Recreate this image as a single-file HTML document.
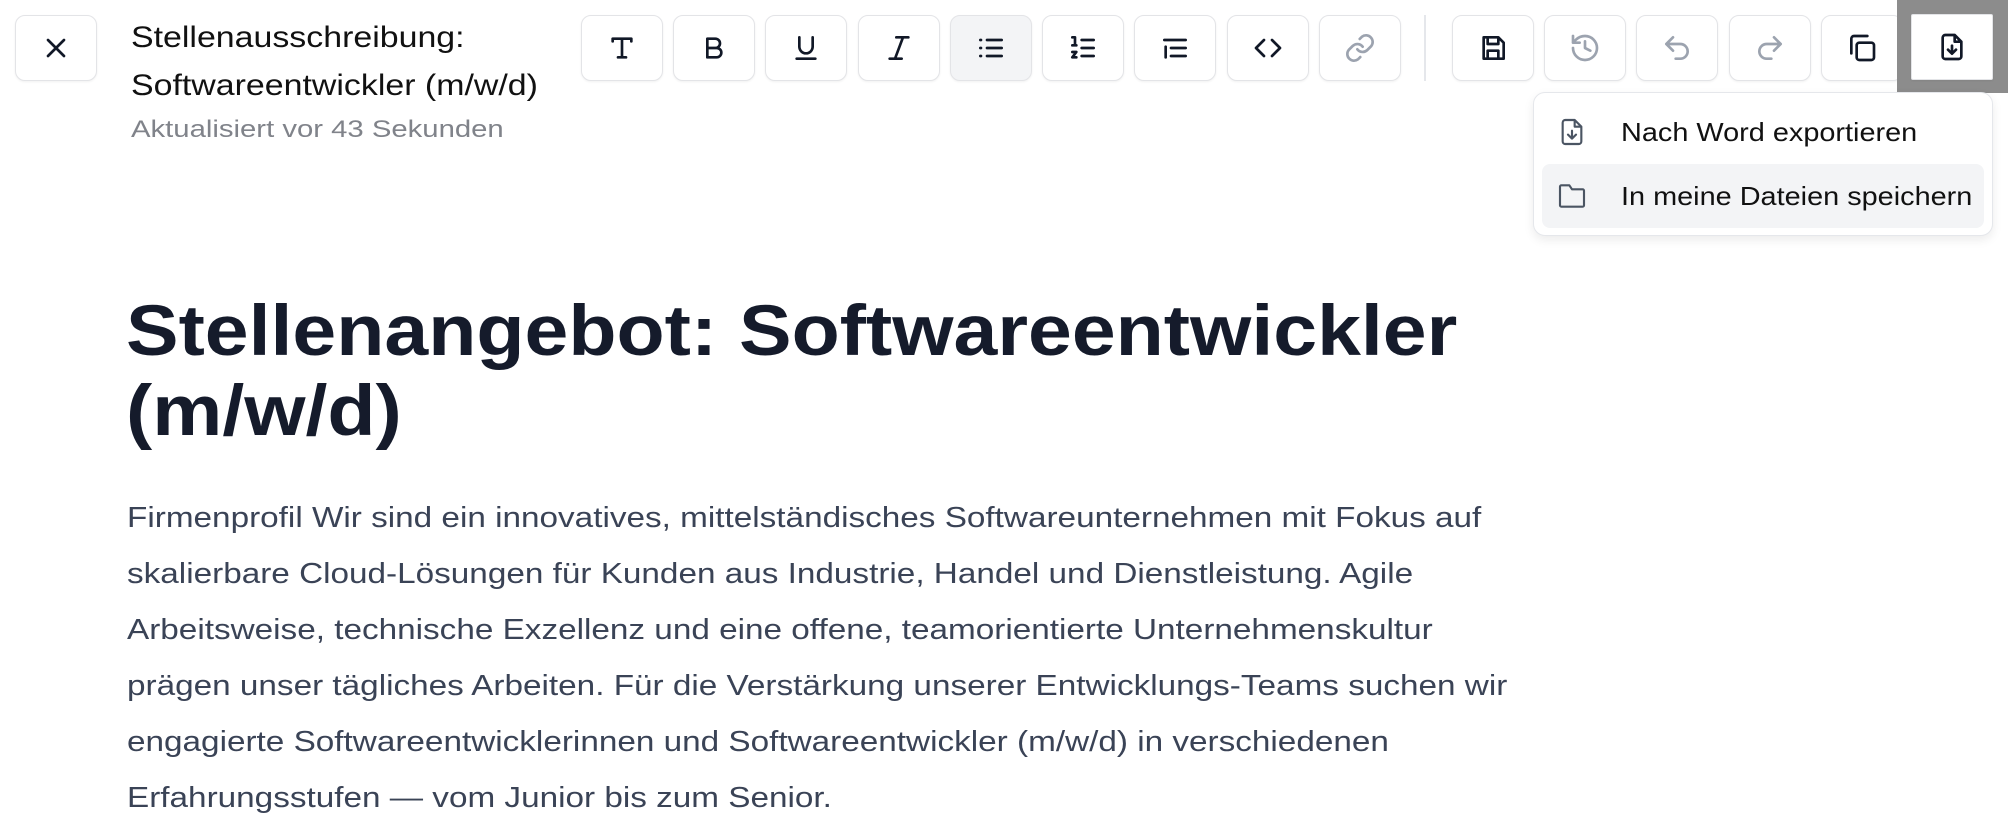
<!DOCTYPE html>
<html><head><meta charset="utf-8"><style>
*{margin:0;padding:0;box-sizing:border-box}
body{width:2008px;height:840px;background:#fff;font-family:"Liberation Sans",sans-serif;position:relative;overflow:hidden}
.btn{position:absolute;top:15px;width:82px;height:66px;border:1px solid #e3e4e7;border-radius:10px;background:#fff;box-shadow:0 1px 2px rgba(0,0,0,.06);display:flex;align-items:center;justify-content:center}
.btn svg{width:32px;height:32px;fill:none;stroke:#111827;stroke-width:2;stroke-linecap:round;stroke-linejoin:round}
.dis svg{stroke:#9ca3af}
.act{background:#f3f4f6}
.t{position:absolute;white-space:nowrap;transform-origin:0 0}
</style></head><body>
<div class="btn" style="left:15px"><svg viewBox="0 0 24 24"><path d="M6 6l12 12M18 6L6 18"/></svg></div>
<div class="t" style="left:131px;top:14px;font-size:30px;line-height:48px;color:#111;transform:scaleX(1.13)">Stellenausschreibung:<br>Softwareentwickler (m/w/d)</div>
<div class="t" style="left:131px;top:116px;font-size:24px;color:#80838a;transform:scaleX(1.22)">Aktualisiert vor 43 Sekunden</div>

<div class="btn" style="left:581px"><svg viewBox="0 0 24 24"><path d="M5 7V5h14v2M12 5v14M9 19h6"/></svg></div>
<div class="btn" style="left:673px"><svg viewBox="0 0 24 24"><path d="M7 5h6a3.5 3.5 0 010 7H7zM7 12h7a3.5 3.5 0 010 7H7z"/></svg></div>
<div class="btn" style="left:765px"><svg viewBox="0 0 24 24"><path d="M7 4v7a5 5 0 0010 0V4M5 20h14"/></svg></div>
<div class="btn" style="left:858px"><svg viewBox="0 0 24 24"><path d="M10 4h9M5 20h9M15 4L9 20"/></svg></div>
<div class="btn act" style="left:950px"><svg viewBox="0 0 24 24"><path d="M9 6h11M9 12h11M9 18h11M4 6h.5M4 12h.5M4 18h.5"/></svg></div>
<div class="btn" style="left:1042px"><svg viewBox="0 0 24 24"><path d="M11 6h9M11 12h9M11 18h9M4 4h2v5M4 10h3M4 15h3l-3 4h3"/></svg></div>
<div class="btn" style="left:1134px"><svg viewBox="0 0 24 24"><path d="M4 6h16M9 12h11M9 18h11M5 11v8"/></svg></div>
<div class="btn" style="left:1227px"><svg viewBox="0 0 24 24"><path d="M9 6l-6 6 6 6M15 6l6 6-6 6"/></svg></div>
<div class="btn dis" style="left:1319px"><svg viewBox="0 0 24 24"><path d="M10 13a5 5 0 007.5.5l3-3a5 5 0 00-7-7l-1.7 1.7M14 11a5 5 0 00-7.5-.5l-3 3a5 5 0 007 7l1.7-1.7"/></svg></div>
<div style="position:absolute;left:1424px;top:15px;width:2px;height:66px;background:#e5e7eb"></div>
<div class="btn" style="left:1452px"><svg viewBox="0 0 24 24"><path d="M5 4h11l4 4v12H5zM8 4v5h8V4M8 20v-6h8v6"/></svg></div>
<div class="btn dis" style="left:1544px"><svg viewBox="0 0 24 24"><path d="M3 12a9 9 0 109-9 9.7 9.7 0 00-6.7 2.7L3 8M3 3v5h5M12 7v5l4 2"/></svg></div>
<div class="btn dis" style="left:1636px"><svg viewBox="0 0 24 24"><path d="M9 14L4 9l5-5M4 9h10.5a5.5 5.5 0 010 11H11"/></svg></div>
<div class="btn dis" style="left:1729px"><svg viewBox="0 0 24 24"><path d="M15 14l5-5-5-5M20 9H9.5a5.5 5.5 0 000 11H13"/></svg></div>
<div class="btn" style="left:1821px"><svg viewBox="0 0 24 24"><rect x="8" y="8" width="13" height="13" rx="2"/><path d="M4 16V5a2 2 0 012-2h10"/></svg></div>
<div style="position:absolute;left:1897px;top:0;width:111px;height:93px;background:#8c8c8c"></div>
<div class="btn" style="left:1911px;top:14px;width:82px;height:66px;border-radius:2px"><svg viewBox="0 0 24 24"><path d="M14 3H7a2 2 0 00-2 2v14a2 2 0 002 2h10a2 2 0 002-2V8zM14 3v5h5M12 11v6M9 14l3 3 3-3"/></svg></div>

<div style="position:absolute;left:1533px;top:92px;width:460px;height:144px;border:1px solid #e5e7eb;border-radius:12px;background:#fff;box-shadow:0 4px 10px rgba(0,0,0,.08)"></div>
<div style="position:absolute;left:1542px;top:164px;width:442px;height:64px;background:#f3f4f6;border-radius:8px"></div>
<svg style="position:absolute;left:1556px;top:116px" width="32" height="32" viewBox="0 0 24 24" fill="none" stroke="#4b5563" stroke-width="1.6" stroke-linecap="round" stroke-linejoin="round"><path d="M14 3H7a2 2 0 00-2 2v14a2 2 0 002 2h10a2 2 0 002-2V8zM14 3v5h5M12 11v6M9 14l3 3 3-3"/></svg>
<svg style="position:absolute;left:1556px;top:180px" width="32" height="32" viewBox="0 0 24 24" fill="none" stroke="#4b5563" stroke-width="1.6" stroke-linecap="round" stroke-linejoin="round"><path d="M4 20h16a1 1 0 001-1V8a1 1 0 00-1-1h-8l-2-3H4a1 1 0 00-1 1v14a1 1 0 001 1z"/></svg>
<div class="t" style="left:1621px;top:117px;font-size:26px;color:#111;transform:scaleX(1.11)">Nach Word exportieren</div>
<div class="t" style="left:1621px;top:181px;font-size:26px;color:#111;transform:scaleX(1.11)">In meine Dateien speichern</div>

<div class="t" style="left:126px;top:292px;font-size:71px;line-height:80px;font-weight:bold;color:#151b2b;transform:scaleX(1.11)">Stellenangebot: Softwareentwickler<br>(m/w/d)</div>
<div class="t" style="left:127px;top:490px;font-size:28.5px;line-height:56px;color:#3a4356;transform:scaleX(1.168)">Firmenprofil Wir sind ein innovatives, mittelständisches Softwareunternehmen mit Fokus auf<br>skalierbare Cloud-Lösungen für Kunden aus Industrie, Handel und Dienstleistung. Agile<br>Arbeitsweise, technische Exzellenz und eine offene, teamorientierte Unternehmenskultur<br>prägen unser tägliches Arbeiten. Für die Verstärkung unserer Entwicklungs-Teams suchen wir<br>engagierte Softwareentwicklerinnen und Softwareentwickler (m/w/d) in verschiedenen<br>Erfahrungsstufen — vom Junior bis zum Senior.</div>
</body></html>
